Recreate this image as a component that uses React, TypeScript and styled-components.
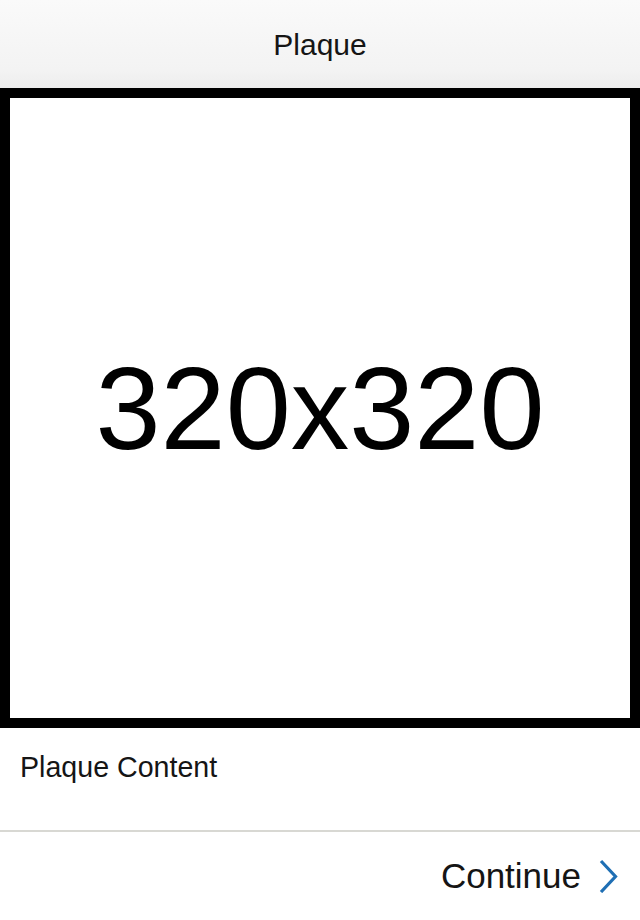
import React from "react";
import styled, { createGlobalStyle } from "styled-components";

const GlobalStyle = createGlobalStyle`
  html, body { margin: 0; padding: 0; background: #ffffff; }
  body { font-family: "Liberation Sans", Arial, sans-serif; color: #111; }
`;

const Screen = styled.div`
  width: 640px;
  min-height: 920px;
  display: flex;
  flex-direction: column;
  background: #ffffff;
`;

const NavBar = styled.header`
  height: 88px;
  display: flex;
  align-items: center;
  justify-content: center;
  background: linear-gradient(#fafafa, #f3f3f3 80%, #ededed);
`;

const NavTitle = styled.h1`
  margin: 0;
  font-size: 30px;
  font-weight: 400;
  color: #151515;
  line-height: 1;
  padding-top: 2px;
`;

const Placeholder = styled.div`
  box-sizing: border-box;
  width: 640px;
  height: 640px;
  border: 10px solid #000;
  background: #fff;
  display: flex;
  align-items: center;
  justify-content: center;
`;

const PlaceholderLabel = styled.span`
  font-size: 117px;
  line-height: 1;
  color: #000;
`;

const ContentSection = styled.section`
  height: 104px;
  box-sizing: border-box;
  padding: 25px 20px 0;
  border-bottom: 2px solid #d8d8d3;
`;

const ContentText = styled.p`
  margin: 0;
  font-size: 28.6px;
  line-height: 28px;
  color: #151515;
`;

const Footer = styled.div`
  display: flex;
  justify-content: flex-end;
  padding: 26px 22px 0 0;
`;

const ContinueButton = styled.button`
  display: flex;
  align-items: center;
  gap: 18px;
  border: none;
  background: none;
  padding: 0;
  font-family: "Liberation Sans", Arial, sans-serif;
  font-size: 35px;
  line-height: 35px;
  color: #151515;
  cursor: pointer;
`;

const Chevron = () => (
  <svg width="19" height="34" viewBox="0 0 19 34" aria-hidden="true">
    <polyline
      points="2,2 16.5,17.5 2,33"
      fill="none"
      stroke="#1f6fb4"
      strokeWidth="3.2"
    />
  </svg>
);

export default function App() {
  return (
    <>
      <GlobalStyle />
      <Screen>
        <NavBar>
          <NavTitle>Plaque</NavTitle>
        </NavBar>
        <Placeholder>
          <PlaceholderLabel>320x320</PlaceholderLabel>
        </Placeholder>
        <ContentSection>
          <ContentText>Plaque Content</ContentText>
        </ContentSection>
        <Footer>
          <ContinueButton>
            Continue
            <Chevron />
          </ContinueButton>
        </Footer>
      </Screen>
    </>
  );
}
